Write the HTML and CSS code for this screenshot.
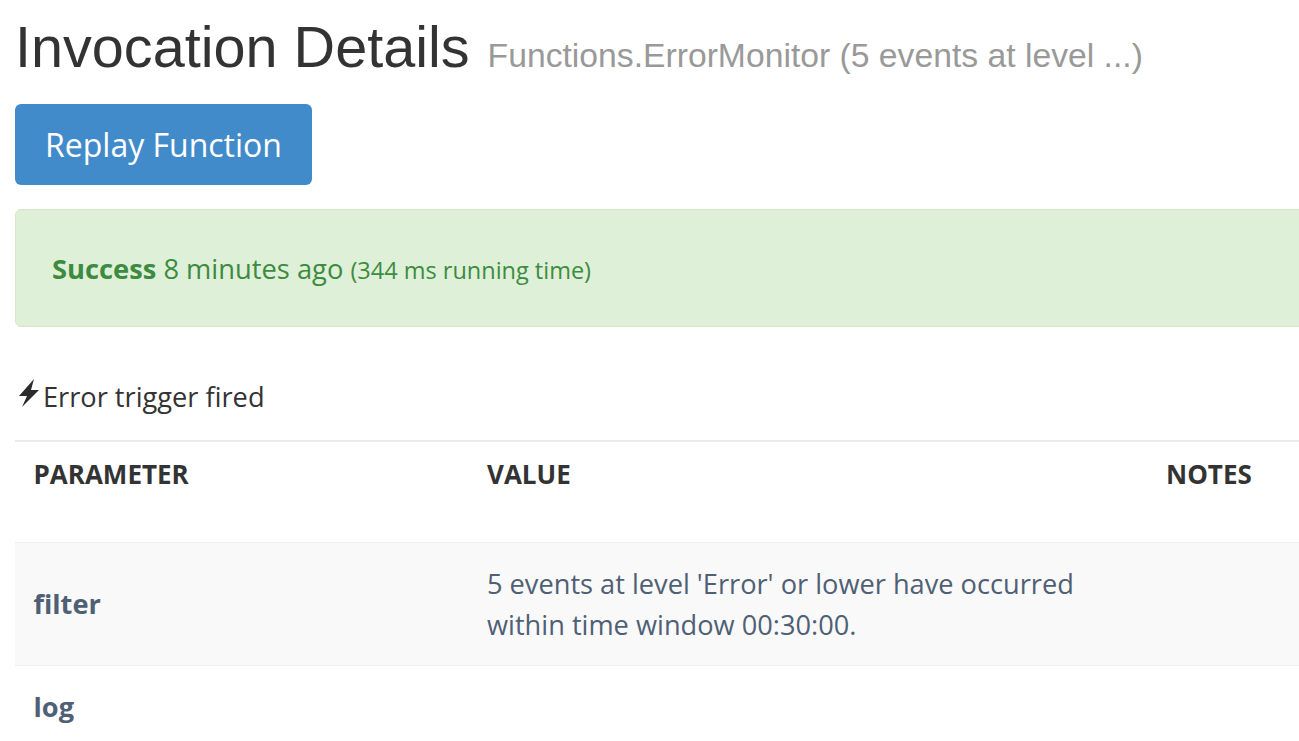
FILE: index.html
```html
<!DOCTYPE html>
<html lang="en">
<head>
    <meta charset="UTF-8">
    <title>Invocation Details</title>
    <link rel="stylesheet" href="styles.css">
</head>
<body>
    <div class="page">
        <div class="container">
            <h2 class="title">Invocation Details <small>Functions.ErrorMonitor (5 events at level ...)</small></h2>
            <a class="btn" href="#">Replay Function</a>
            <div class="alert"><strong>Success</strong> 8 minutes ago <small>(344 ms running time)</small></div>
            <p class="trigger">
                <svg class="bolt" viewBox="0 0 20 28" width="20" height="28"><path d="M15 0 0 17h8L3 28 20 11h-8l3-11z" fill="#2b2b2b"/></svg>Error trigger fired
            </p>
            <table class="params">
                <thead>
                    <tr><th class="col-name">Parameter</th><th class="col-value">Value</th><th>Notes</th></tr>
                </thead>
                <tbody>
                    <tr class="odd"><td class="name">filter</td><td>5 events at level 'Error' or lower have occurred within time window 00:30:00.</td><td></td></tr>
                    <tr><td class="name">log</td><td></td><td></td></tr>
                </tbody>
            </table>
        </div>
    </div>
</body>
</html>
```

FILE: styles.css
```css
body {
    margin: 0;
    background: #fff;
    font-family: "Open Sans", sans-serif;
    color: #333;
}
.page {
    height: 741px;
    overflow: hidden;
}
.container {
    width: 1400px;
    padding-left: 15px;
}
.title {
    margin: 0;
    padding-top: 15px;
    font-family: "Liberation Sans", sans-serif;
    font-size: 57.6px;
    font-weight: 400;
    line-height: 64px;
}
.title small {
    margin-left: 2px;
    font-size: 33.7px;
    color: #999;
}
.btn {
    display: inline-block;
    margin-top: 17px;
    padding: 0 30px;
    height: 81px;
    line-height: 81px;
    background: #428bca;
    border-radius: 6px;
    color: #fff;
    font-size: 32px;
    text-decoration: none;
}
.alert {
    margin-top: 24px;
    height: 118px;
    line-height: 117px;
    padding-left: 36px;
    background: #dff0d8;
    border: 1px solid #d6e9c6;
    box-sizing: border-box;
    border-radius: 6px;
    color: #3d8b40;
    font-size: 27.3px;
}
.alert small {
    font-size: 23.5px;
}
.trigger {
    display: flex;
    align-items: center;
    margin: 51px 0 0;
    height: 36px;
    padding-left: 4px;
    font-size: 27.2px;
    color: #333;
}
.bolt {
    margin: -6px 4px 0 0;
}
.params {
    width: 100%;
    margin-top: 26px;
    border-collapse: collapse;
    border-top: 2px solid #e7eaf0;
    font-size: 27.2px;
    color: #4f6075;
}
.params th {
    height: 101px;
    padding: 14px 20px 0;
    box-sizing: border-box;
    vertical-align: top;
    text-align: left;
    text-transform: uppercase;
    font-size: 26px;
    color: #333;
}
.params th:first-child,
.params .name {
    padding-left: 18.5px;
}
.params td {
    padding: 20px;
    line-height: 41px;
    border-top: 1px solid #eef0f3;
}
.col-name {
    width: 452px;
}
.col-value {
    width: 679px;
}
.params .name {
    font-weight: 700;
}
.params .odd .name {
    padding-top: 20px;
    padding-bottom: 20px;
}
.odd {
    background: #f9f9f9;
}
```
